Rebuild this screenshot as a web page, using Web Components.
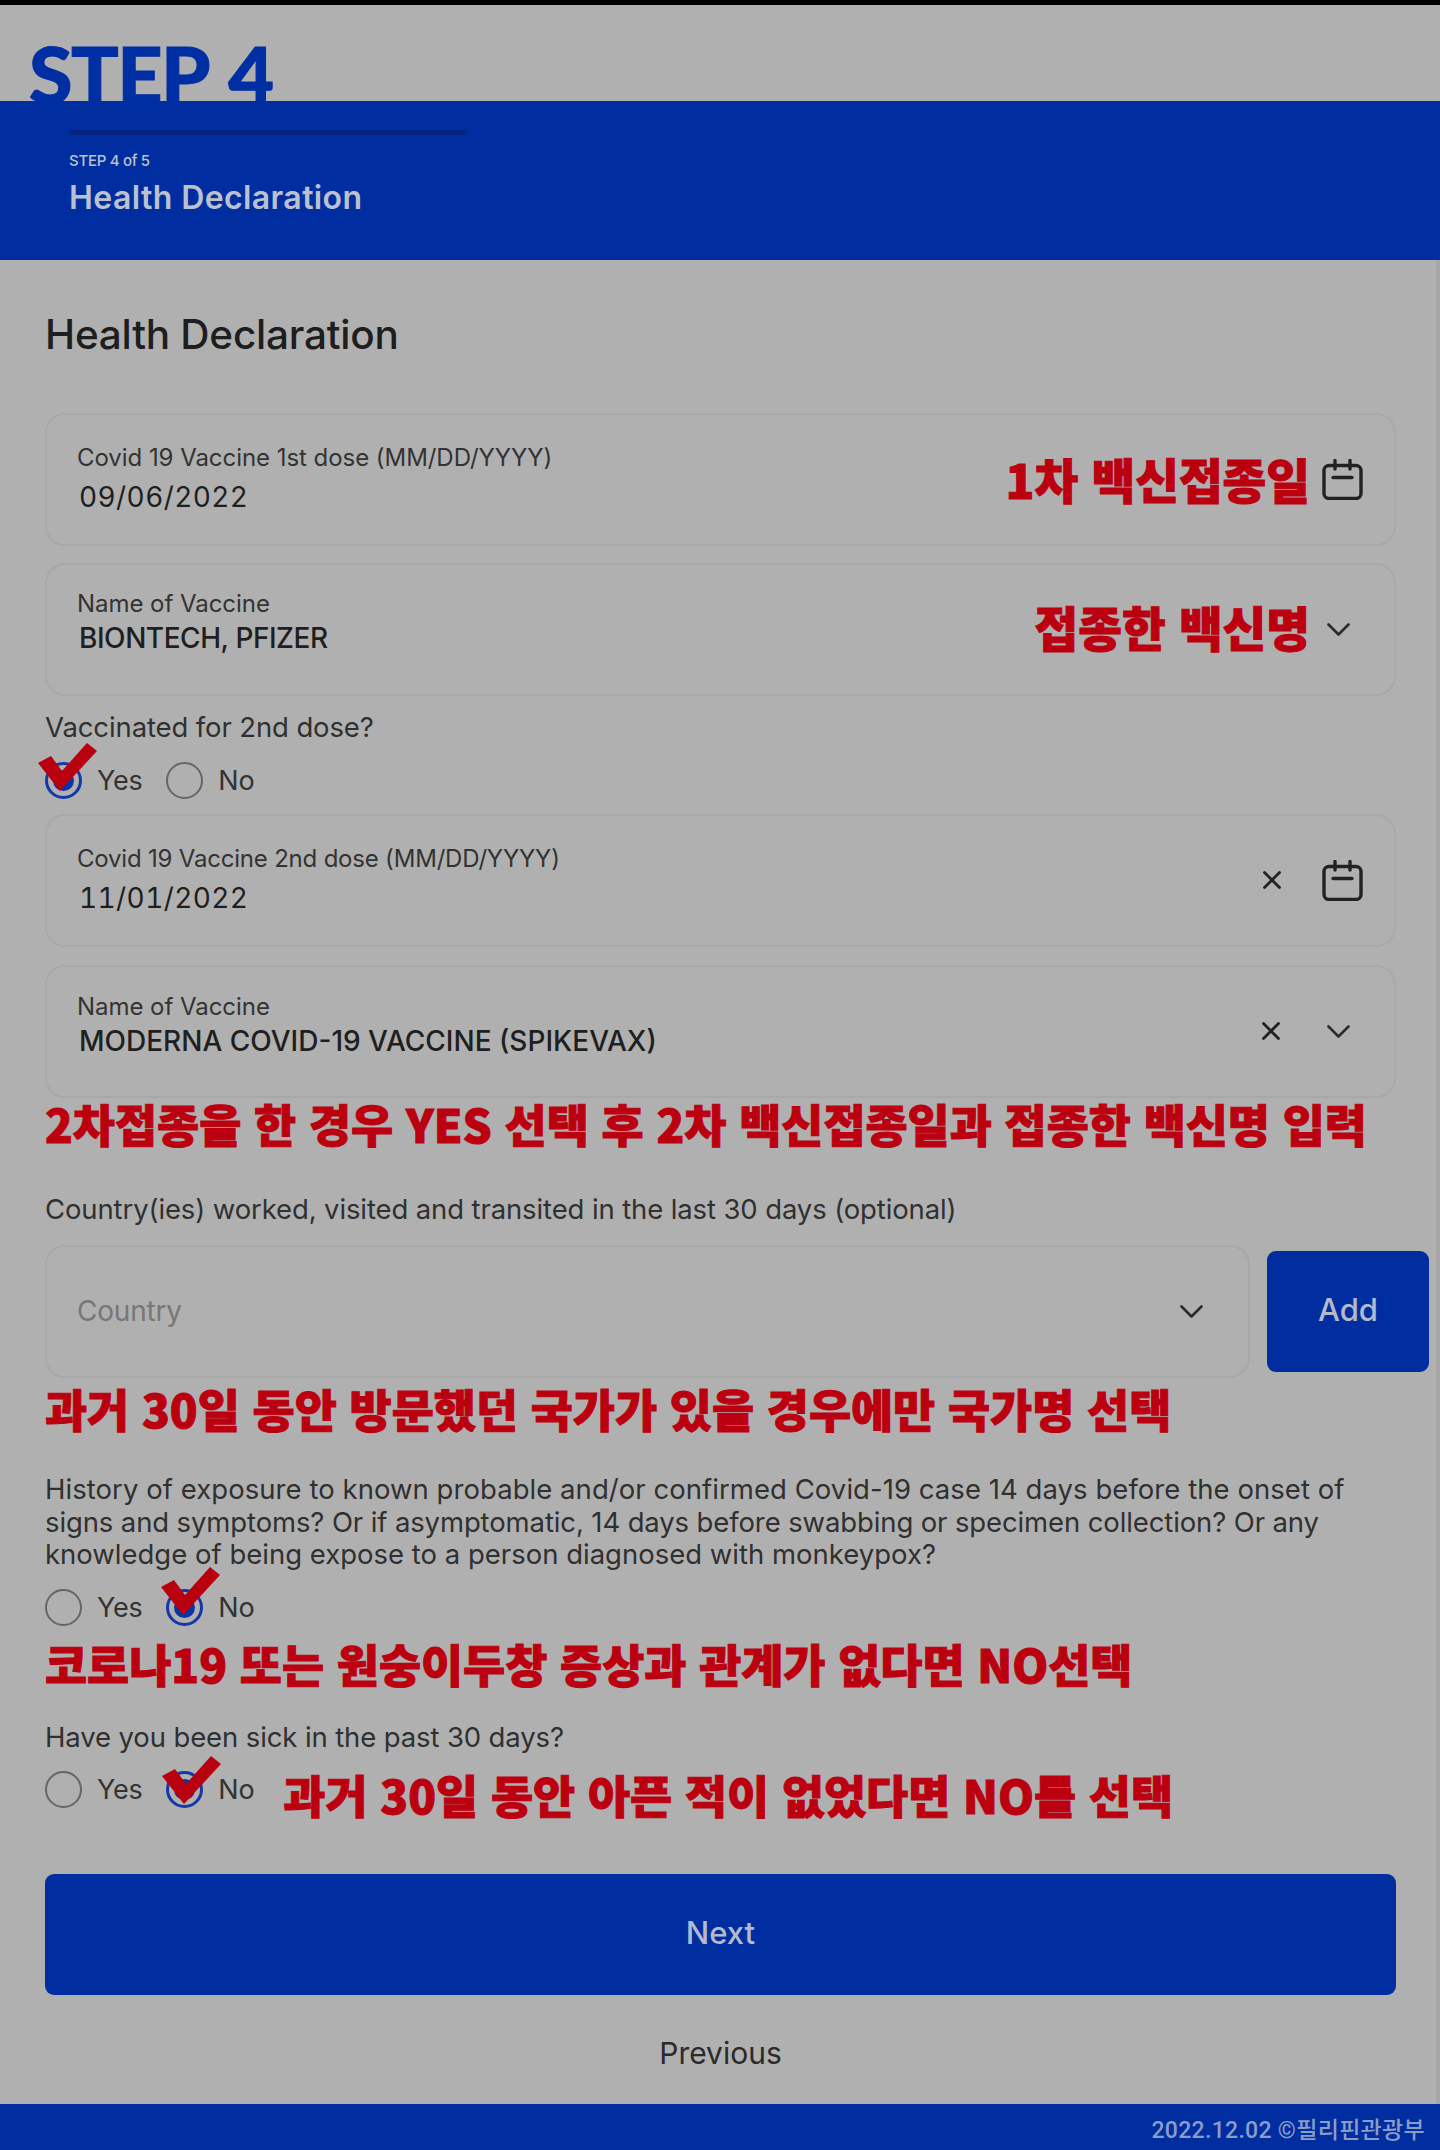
<!DOCTYPE html>
<html lang="ko">
<head>
<meta charset="utf-8">
<title>Health Declaration</title>
<style>
html,body{margin:0;padding:0;background:#b0b0b0}
body{width:1440px;height:2150px;overflow:hidden;font-family:Inter,"Noto Sans CJK KR",sans-serif;color:#242424}
</style>
</head>
<body>
<template id="t-step">
<style>
:host{display:block;height:101px;overflow:hidden;border-top:5px solid #000;box-sizing:border-box}
div{font:900 79px/1 Lato,sans-serif;color:#002ea3;padding-left:29px;margin-top:29px;letter-spacing:-1.5px;word-spacing:4px;-webkit-text-stroke:1px #002ea3}
</style><div><slot></slot></div>
</template>
<template id="t-header">
<style>
:host{display:block;height:159px;background:#002ea1;box-sizing:border-box;padding:29px 0 0 69px;color:#bcc1cf}
.bar{width:398px;height:5px;background:#02247f;border-radius:2px;margin-bottom:16px}
.s{font:500 15px/20px Inter,sans-serif;letter-spacing:-.3px}
.t{font:600 32px/40px Inter,sans-serif;margin-top:7px;letter-spacing:.4px}
</style>
<div class="bar"></div><div class="s"><slot name="step"></slot></div><div class="t"><slot name="title"></slot></div>
</template>
<template id="t-field">
<style>
:host{display:flex;align-items:center;box-sizing:border-box;height:133px;border:2px solid #a8a8a8;border-radius:20px;padding:0 31px 0 30px;flex:1 1 auto;min-width:0}
.txt{flex:1;min-width:0;display:flex;flex-direction:column}
.l{font:400 24px/30px Inter,sans-serif;color:#333;letter-spacing:-.05px;margin-bottom:8px}
.v{font:500 28px/32px Inter,sans-serif;color:#1f1f1f;margin-left:2px;letter-spacing:0}
:host([kind=select]) .txt{margin-top:var(--txt-shift,-13px)}
:host([kind=select]) .l{margin-bottom:3px}
:host([kind=date]) .v{letter-spacing:.4px;font-weight:400;font-variant-numeric:tabular-nums}
:host([kind=date]) .txt{margin-top:-3px}
:host([kind=placeholder]) .l{margin:0}
:host([kind=placeholder]) .v{display:none}
.icons{display:flex;align-items:center}
</style>
<div class="txt"><div class="l"><slot name="label"></slot></div><div class="v"><slot name="value"></slot></div></div>
<div class="icons"><slot name="end"></slot></div>
</template>
<template id="t-radio">
<style>
:host{display:inline-flex;align-items:center;font:400 27px/37px Inter,sans-serif;color:#333;letter-spacing:-.3px}
.c{position:relative;box-sizing:border-box;width:37px;height:37px;border:2px solid #666;border-radius:50%;margin-right:15px;flex:none}
:host([checked]) .c{border:3px solid #1438a6}
:host([checked]) .c::before{content:"";position:absolute;inset:5px;border-radius:50%;background:#0a33a3}
svg{position:absolute;left:var(--mx,-9px);top:var(--my,-22px);display:none}
:host([mark]) svg{display:block}
</style>
<span class="c"><svg width="60" height="50" viewBox="0 0 60 50"><polygon fill="#b8000f" points="0,20 13,13 24,28 49,0 59,8 22,48"/></svg></span><slot></slot>
</template>
<template id="t-note">
<style>
:host{display:block;font:900 45.75px/44px "Noto Sans CJK KR",sans-serif;color:#bb0010;white-space:nowrap;-webkit-text-stroke:1px #bb0010}
:host([big]){font-size:47.5px}
</style><slot></slot>
</template>
<template id="t-row">
<style>:host{display:flex;align-items:center}</style><slot></slot>
</template>
<template id="t-button">
<style>
:host{display:flex;align-items:center;justify-content:center;box-sizing:border-box;background:#002ea1;color:#b4bacb;border-radius:9px;font:500 31px/1 Inter,sans-serif;flex:none;padding-bottom:5px}
:host([plain]){background:transparent;color:#2a2a2a;height:108px;padding:8px 0 0;font-weight:400;font-size:30px}
</style><slot></slot>
</template>
<template id="t-text">
<style>:host{display:block;font:400 27.5px/32.5px Inter,sans-serif;color:#303030;letter-spacing:-.12px}</style><slot></slot>
</template>
<template id="t-title">
<style>:host{display:block;font:500 40.5px/42px Inter,sans-serif;color:#1e1e1e;letter-spacing:-.25px}</style><slot></slot>
</template>
<template id="t-footer">
<style>:host{display:flex;align-items:center;justify-content:flex-end;height:46px;background:#002ea1;color:#8c9cc8;font:500 23px/1 Roboto,"Noto Sans CJK KR",sans-serif;padding:6px 15px 0 0;box-sizing:border-box;letter-spacing:.3px}</style><slot></slot>
</template>
<template id="t-main">
<style>:host{display:block;height:1844px;box-sizing:border-box;padding:54px 44px 0 45px;box-shadow:inset -4px 0 0 #a6a6a6;overflow:hidden}</style><slot></slot>
</template>
<template id="t-cal">
<style>:host{display:block;width:41px;height:41px}</style>
<svg width="41" height="41" viewBox="0 0 41 41" fill="none" stroke="#222" stroke-width="3.4" stroke-linecap="round" stroke-linejoin="round"><rect x="2" y="6.5" width="37" height="33" rx="5"/><path d="M13 1.5V10M28 1.5V10M11 18.5H30"/></svg>
</template>
<template id="t-x">
<style>:host{display:block;width:18px;height:18px;margin-right:41px}</style>
<svg width="18" height="18" viewBox="0 0 18 18" fill="none" stroke="#222" stroke-width="2.8" stroke-linecap="round"><path d="M1.5 1.5L16.5 16.5M16.5 1.5L1.5 16.5"/></svg>
</template>
<template id="t-chev">
<style>:host{display:block;width:23px;height:13px;margin:0 13px 0 6px}svg{display:block}</style>
<svg width="23" height="13" viewBox="0 0 23 13" fill="none" stroke="#2b2b2b" stroke-width="2.6" stroke-linecap="round" stroke-linejoin="round"><path d="M1.5 1.5L11.5 11.5L21.5 1.5"/></svg>
</template>

<script>
const names={'step-title':'t-step','form-header':'t-header','form-field':'t-field','form-radio':'t-radio','red-note':'t-note','form-row':'t-row','form-button':'t-button','form-text':'t-text','form-title':'t-title','page-footer':'t-footer','form-main':'t-main','icon-cal':'t-cal','icon-x':'t-x','icon-chev':'t-chev'};
for(const [n,t] of Object.entries(names)){
  customElements.define(n,class extends HTMLElement{
    constructor(){super();this.attachShadow({mode:'open'}).appendChild(document.getElementById(t).content.cloneNode(true));}
  });
}
</script>

<step-title>STEP 4</step-title>
<form-header><span slot="step">STEP 4 of 5</span><span slot="title">Health Declaration</span></form-header>
<form-main>
  <form-title style="margin-bottom:57px">Health Declaration</form-title>

  <form-field kind="date">
    <span slot="label">Covid 19 Vaccine 1st dose (MM/DD/YYYY)</span><span slot="value">09/06/2022</span>
    <red-note big slot="end" style="margin:0 12px 2px 0">1차 백신접종일</red-note><icon-cal slot="end"></icon-cal>
  </form-field>
  <form-field kind="select" style="margin-top:17px;--txt-shift:-16px">
    <span slot="label">Name of Vaccine</span><span slot="value" style="letter-spacing:-.45px">BIONTECH, PFIZER</span>
    <red-note big slot="end" style="margin:0 11px 6px 0">접종한 백신명</red-note><icon-chev slot="end"></icon-chev>
  </form-field>

  <form-text style="margin-top:15px">Vaccinated for 2nd dose?</form-text>
  <form-row style="margin-top:18px;gap:24px"><form-radio checked mark style="--mx:-10px">Yes</form-radio><form-radio>No</form-radio></form-row>

  <form-field kind="date" style="margin-top:15px">
    <span slot="label" style="letter-spacing:-.2px">Covid 19 Vaccine 2nd dose (MM/DD/YYYY)</span><span slot="value">11/01/2022</span>
    <icon-x slot="end"></icon-x><icon-cal slot="end"></icon-cal>
  </form-field>
  <form-field kind="select" style="margin-top:18px">
    <span slot="label">Name of Vaccine</span><span slot="value">MODERNA COVID-19 VACCINE (SPIKEVAX)</span>
    <icon-x slot="end"></icon-x><icon-chev slot="end"></icon-chev>
  </form-field>
  <red-note style="margin-top:3px">2차접종을 한 경우 YES 선택 후 2차 백신접종일과 접종한 백신명 입력</red-note>

  <form-text style="margin-top:48px">Country(ies) worked, visited and transited in the last 30 days (optional)</form-text>
  <form-row style="margin-top:20px;gap:17px;margin-right:-33px">
    <form-field kind="placeholder">
      <span slot="label" style="font-size:28px;color:#777;letter-spacing:-.2px">Country</span>
      <icon-chev slot="end" style="margin-right:14px"></icon-chev>
    </form-field>
    <form-button style="width:162px;height:121px">Add</form-button>
  </form-row>
  <red-note style="margin-top:8px">과거 30일 동안 방문했던 국가가 있을 경우에만 국가명 선택</red-note>

  <form-text style="margin-top:43px"><span style="letter-spacing:.05px">History of exposure to known probable and/or confirmed Covid-19 case 14 days before the onset of</span> signs and symptoms? Or if asymptomatic, 14 days before swabbing or specimen collection? Or any <span style="letter-spacing:0">knowledge of being expose to a person diagnosed with monkeypox?</span></form-text>
  <form-row style="margin-top:18px;gap:24px"><form-radio>Yes</form-radio><form-radio checked mark style="--mx:-8px;--my:-25px">No</form-radio></form-row>
  <red-note style="margin-top:15px">코로나19 또는 원숭이두창 증상과 관계가 없다면 NO선택</red-note>

  <form-text style="margin-top:36px">Have you been sick in the past 30 days?</form-text>
  <form-row style="margin-top:18px;gap:24px"><form-radio>Yes</form-radio><form-radio checked mark style="--mx:-7px;--my:-18px">No</form-radio><red-note style="margin:-3px 0 -11px 5px">과거 30일 동안 아픈 적이 없었다면 NO를 선택</red-note></form-row>

  <form-button style="height:121px;margin-top:66px">Next</form-button>
  <form-button plain>Previous</form-button>
</form-main>
<page-footer>2022.12.02 ©필리핀관광부</page-footer>
</body>
</html>
